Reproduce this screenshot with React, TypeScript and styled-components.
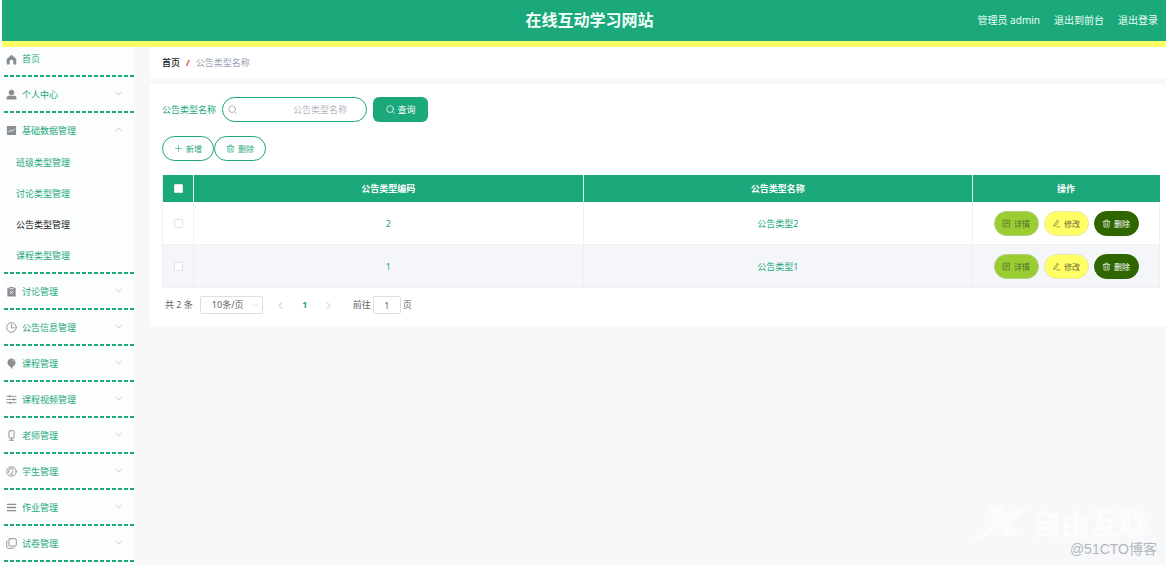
import React from "react";
import styled, { createGlobalStyle, css } from "styled-components";

const green = "#1ba87a";
const uiFont = `"Noto Sans", "Noto Sans CJK SC", sans-serif`;

const GlobalStyle = createGlobalStyle`
  * { box-sizing: border-box; }
  html { background: #fff; }
  body { margin: 0; font-family: ${uiFont}; font-size: 9px; line-height: 12px; color: ${green}; }
  button, input, select { font: inherit; color: inherit; margin: 0; }
  a { color: inherit; text-decoration: none; }
`;

const Page = styled.div`
  position: relative;
  display: flex;
  flex-direction: column;
  min-height: 100vh;
  padding-left: 2px;
  overflow: hidden;
`;

const Header = styled.header`
  display: grid;
  grid-template-columns: 1fr auto 1fr;
  align-items: center;
  height: 47px;
  padding: 0 8px 0 19px;
  background: ${green};
  border-bottom: 6px solid #ffff66;
  color: #eafff7;
`;

const SiteTitle = styled.h1`
  grid-column: 2;
  margin: 0;
  padding-bottom: 2px;
  font-size: 16px;
  line-height: 24px;
  font-weight: 700;
  color: #f4fffb;
`;

const HeaderLinks = styled.nav`
  display: flex;
  justify-content: flex-end;
  gap: 14px;
  padding-bottom: 2px;
  font-size: 10px;
  line-height: 16px;
`;

const Body = styled.div`
  flex: 1;
  display: flex;
  background: #f6f8fa;
`;

const Aside = styled.aside`
  flex: 0 0 133px;
  background: #fcfdfd;
`;

const MenuList = styled.ul`
  list-style: none;
  margin: 0;
  padding: 0 0 0 2px;
`;

const MenuGroup = styled.li`
  padding-bottom: 2px;
  background: repeating-linear-gradient(90deg, ${green} 0 4px, transparent 4px 6px) bottom left / 100% 2px no-repeat;
`;

const menuEntry = css`
  display: flex;
  align-items: center;
  width: 100%;
  padding: 0 13px 0 2px;
  border: 0;
  background: none;
  text-align: left;
  color: ${green};
`;

const HomeLink = styled.a`
  ${menuEntry}
  height: 28px;
  padding-bottom: 4px;
`;

const MenuButton = styled.button`
  ${menuEntry}
  height: 34px;
  padding-top: 1px;
  cursor: pointer;
`;

const MenuIcon = styled.svg`
  flex: none;
  width: 11px;
  height: 11px;
  margin-right: 5px;
  color: #8a8d92;
`;

const Arrow = styled.svg<{ $up?: boolean }>`
  width: 7px;
  height: 7px;
  margin-left: auto;
  margin-bottom: 3px;
  color: #a3a8ae;
  transform: ${(p) => (p.$up ? "rotate(180deg)" : "none")};
`;

const SubMenu = styled.ul`
  list-style: none;
  margin: 0;
  padding: 0 0 1px;
`;

const SubLink = styled.a<{ $active?: boolean }>`
  display: flex;
  align-items: center;
  height: 31px;
  padding-left: 12px;
  color: ${(p) => (p.$active ? "#222" : green)};
`;

const Main = styled.main`
  flex: 1;
  min-width: 0;
  padding-left: 15px;
`;

const Breadcrumb = styled.nav`
  display: flex;
  align-items: center;
  gap: 6px;
  height: 31px;
  padding-left: 12px;
  margin-bottom: 6px;
  background: #fff;
  color: #999fb8;
`;

const Crumb = styled.a`
  color: #222;
  font-weight: 500;
`;

const Slash = styled.span`
  color: #d9480f;
  font-weight: 700;
`;

const Card = styled.section`
  padding: 13px 6px 12px 12px;
  background: #fff;
`;

const SearchForm = styled.form`
  display: flex;
  align-items: center;
  margin-bottom: 14px;
`;

const SearchBox = styled.div`
  position: relative;
  margin: 0 6px;
  color: #8fa59d;
`;

const SearchInput = styled.input`
  display: block;
  width: 145px;
  height: 25px;
  padding: 0 19px 0 24px;
  border: 1px solid ${green};
  border-radius: 13px;
  background: #fff;
  text-align: right;
  outline: 0;
  &::placeholder { color: #b4b8bf; opacity: 1; }
`;

const InputIcon = styled.svg`
  position: absolute;
  left: 6px;
  top: 8px;
  width: 9px;
  height: 9px;
`;

const SmallIcon = styled.svg`
  flex: none;
  width: 9px;
  height: 9px;
`;

const Button = styled.button`
  display: inline-flex;
  align-items: center;
  justify-content: center;
  gap: 3px;
  height: 25px;
  padding: 0;
  cursor: pointer;
`;

const QueryButton = styled(Button)`
  width: 55px;
  border: 0;
  border-radius: 6px;
  background: ${green};
  color: #fff;
`;

const Toolbar = styled.div`
  display: flex;
  margin-bottom: 14px;
`;

const OutlineButton = styled(Button)`
  width: 52px;
  border: 1px solid ${green};
  border-radius: 13px;
  background: #fff;
  font-size: 8px;
`;

const tones = {
  detail: css`background: #9acd32; border-color: #b0cf7c; color: #4f6a2c;`,
  edit: css`background: #ffff66; border-color: #e8e8a8; color: #6b6b3a;`,
  remove: css`background: #2f6600; border-color: #2f6600; color: #fff;`,
};

const RowButton = styled(Button)<{ $tone: keyof typeof tones }>`
  width: 45px;
  border: 1px solid;
  border-radius: 13px;
  font-size: 8px;
  ${(p) => tones[p.$tone]}
`;

const Actions = styled.div`
  display: flex;
  justify-content: center;
  gap: 5px;
`;

const Table = styled.table`
  width: 100%;
  table-layout: fixed;
  border-collapse: separate;
  border-spacing: 0;
  border-left: 1px solid #eef0f4;
`;

const Col = styled.col<{ $width?: number }>`
  ${(p) => p.$width && `width: ${p.$width}px;`}
`;

const HeadCell = styled.th`
  height: 27px;
  padding: 0;
  background: ${green};
  border-right: 1px solid #e4f4ee;
  color: #fff;
  font-weight: 700;
  &:last-child { border-right-color: ${green}; }
`;

const Cell = styled.td`
  height: 43px;
  padding: 1px 0 0;
  border-right: 1px solid #eef0f4;
  border-bottom: 1px solid #eef0f4;
  text-align: center;
`;

const Row = styled.tr`
  background: #fff;
  &:nth-child(even) { background: #f5f6fa; }
`;

const Check = styled.input`
  appearance: none;
  display: block;
  width: 9px;
  height: 9px;
  margin: 0 auto;
  border: 1px solid #dfe2e8;
  border-radius: 1px;
  background: #fff;
`;

const Pagination = styled.div`
  display: flex;
  align-items: center;
  height: 18px;
  margin-top: 8px;
  padding-left: 3px;
  color: #606266;
`;

const SizeBox = styled.div`
  position: relative;
  margin: 0 14px 0 7px;
`;

const SizeSelect = styled.select`
  appearance: none;
  display: block;
  width: 63px;
  height: 18px;
  padding: 0 11px;
  border: 1px solid #dcdfe6;
  border-radius: 2px;
  background: #fff;
`;

const SelectArrow = styled.svg`
  position: absolute;
  right: 5px;
  top: 6px;
  width: 6px;
  height: 6px;
  color: #b4b8bf;
  pointer-events: none;
`;

const PageButton = styled.button<{ $current?: boolean }>`
  display: flex;
  align-items: center;
  justify-content: center;
  width: 8px;
  height: 18px;
  padding: 0;
  margin-right: 16px;
  border: 0;
  background: none;
  font-weight: 700;
  color: ${(p) => (p.$current ? green : "#a8abb2")};
`;

const Jumper = styled.label`
  display: flex;
  align-items: center;
  gap: 2px;
  margin-left: 4px;
`;

const PageInput = styled.input`
  width: 28px;
  height: 18px;
  padding: 0;
  border: 1px solid #dcdfe6;
  border-radius: 2px;
  text-align: center;
`;

const Brand = styled.div`
  position: absolute;
  right: 18px;
  bottom: 20px;
  display: flex;
  align-items: center;
  gap: 2px;
  color: #fbfcfd;
  font-size: 29px;
  line-height: 29px;
  font-weight: 900;
  pointer-events: none;
`;

const BrandMark = styled.svg`
  width: 62px;
  height: 44px;
`;

const Credit = styled.div`
  position: absolute;
  right: 9px;
  bottom: 8px;
  font-family: "Liberation Sans", "Noto Sans CJK SC", sans-serif;
  font-size: 14px;
  line-height: 16px;
  color: #b3b6ba;
  pointer-events: none;
`;

const stroke = { fill: "none", stroke: "currentColor", strokeWidth: 1, strokeLinecap: "round", strokeLinejoin: "round" } as const;

const icons = {
  home: <path fill="currentColor" d="M6 .8 11.200 5.400v6H8V8.300a2 2 0 0 0-4 0v3.100H.8v-6z" />,
  user: (
    <g fill="currentColor">
      <circle cx="6" cy="3.700" r="3" />
      <path d="M.6 11.400V9.600C.6 8 2 7.300 4 7.300h4c2 0 3.400.7 3.400 2.300v1.800z" />
    </g>
  ),
  chart: (
    <g>
      <rect x="1" y="1" width="10" height="10" rx=".6" fill="currentColor" />
      <path d="M2.600 8 5 5.500l1.500 1.400L9.400 4" fill="none" stroke="#fff" strokeWidth=".9" />
    </g>
  ),
  board: (
    <g>
      <path fill="currentColor" d="M1.500 1.800H4V1h4v.8h2.500V11.500h-9z" />
      <path d="M3.800 2.900h4.400M4.300 5.300l3.400 3.400M7.700 5.300 4.300 8.700" stroke="#fff" strokeWidth=".9" fill="none" />
    </g>
  ),
  clock: (
    <g {...stroke}>
      <circle cx="6" cy="6" r="5.200" />
      <path d="M6 2.800V6.400h2.800" />
    </g>
  ),
  balloon: (
    <g>
      <path fill="currentColor" d="M6 .6c2.600 0 4.400 1.900 4.400 4.300C10.400 7.600 8 9.200 6.700 10v1.500H5.300V10C4 9.200 1.600 7.600 1.600 4.900 1.600 2.500 3.400.6 6 .6z" />
      <path d="M6.300 2.200c1.400.1 2.300 1 2.400 2.300" fill="none" stroke="#ddd" strokeWidth=".7" />
    </g>
  ),
  sliders: (
    <g {...stroke}>
      <path d="M1 2.500h10M1 6h10M1 9.500h10" />
      <path strokeWidth="1.600" d="M4 1.900v1.200M8.300 5.400v1.200M4.500 8.900v1.200" />
    </g>
  ),
  mic: (
    <g {...stroke}>
      <rect x="3.200" y=".8" width="5.600" height="8" rx="1" />
      <path d="M6 8.800v2.400M3.600 11.200h4.800" />
    </g>
  ),
  gauge: (
    <g {...stroke}>
      <circle cx="6" cy="6" r="5.200" />
      <path d="M2.800 7A3.300 3.300 0 0 1 8.200 3.600M6 8l1.700-2.600M5.200 9h1.600" />
    </g>
  ),
  lines: <path {...stroke} strokeWidth="1.400" d="M1.500 2.500h9M1.500 6h9M1.500 9.500h9" />,
  copy: (
    <g {...stroke}>
      <rect x="3.200" y=".8" width="8" height="8" rx="1.200" />
      <path d="M1.600 3C.9 3.300.8 3.700.8 4.300v5.200c0 1 .7 1.700 1.700 1.700h5.200c.6 0 1-.1 1.400-.8" />
    </g>
  ),
  search: (
    <g {...stroke}>
      <circle cx="5.500" cy="5.500" r="4.500" />
      <path d="m9 9 2 2" />
    </g>
  ),
  plus: <path {...stroke} strokeWidth=".8" d="M6 2v8M2 6h8" />,
  trash: <path {...stroke} strokeWidth=".9" d="M1.500 3.500h9M4.300 3.300V1.500h3.400v1.800M2.600 3.700v7h6.800v-7M4.900 5.800v2.800M7.100 5.800v2.800" />,
  doc: <path {...stroke} strokeWidth=".9" d="M2 1.500h8v9H2zM4 4h4M4 6h4M4 8.200h2" />,
  pen: <path {...stroke} strokeWidth=".9" d="M3 7.700 7.200 1.600l1.700 1.200-4.200 6.100-2 .7zM6.500 10.500h4" />,
};

type IconName = keyof typeof icons;

const Chevron = () => <path {...stroke} d="M1 3.500 6 8.500l5-5" />;

const Glyph = ({ name }: { name: IconName }) => (
  <SmallIcon viewBox="0 0 12 12" aria-hidden="true">{icons[name]}</SmallIcon>
);

const basics = ["班级类型管理", "讨论类型管理", "公告类型管理", "课程类型管理"];

const menu: { icon: IconName; label: string; children?: string[] }[] = [
  { icon: "user", label: "个人中心" },
  { icon: "chart", label: "基础数据管理", children: basics },
  { icon: "board", label: "讨论管理" },
  { icon: "clock", label: "公告信息管理" },
  { icon: "balloon", label: "课程管理" },
  { icon: "sliders", label: "课程视频管理" },
  { icon: "mic", label: "老师管理" },
  { icon: "gauge", label: "学生管理" },
  { icon: "lines", label: "作业管理" },
  { icon: "copy", label: "试卷管理" },
];

const rows = [
  { code: 2, name: "公告类型2" },
  { code: 1, name: "公告类型1" },
];

export default function App() {
  return (
    <Page>
      <GlobalStyle />
      <Header>
        <SiteTitle>在线互动学习网站</SiteTitle>
        <HeaderLinks>
          <span>管理员 admin</span>
          <a href="#front">退出到前台</a>
          <a href="#logout">退出登录</a>
        </HeaderLinks>
      </Header>
      <Body>
        <Aside>
          <MenuList>
            <MenuGroup>
              <HomeLink href="#home">
                <MenuIcon viewBox="0 0 12 12" aria-hidden="true">{icons.home}</MenuIcon>
                首页
              </HomeLink>
            </MenuGroup>
            {menu.map((m) => (
              <MenuGroup key={m.label}>
                <MenuButton type="button" aria-expanded={!!m.children}>
                  <MenuIcon viewBox="0 0 12 12" aria-hidden="true">{icons[m.icon]}</MenuIcon>
                  {m.label}
                  <Arrow viewBox="0 0 12 12" $up={!!m.children} aria-hidden="true"><Chevron /></Arrow>
                </MenuButton>
                {m.children && (
                  <SubMenu>
                    {m.children.map((c) => (
                      <li key={c}>
                        <SubLink href="#list" $active={c === "公告类型管理"}>{c}</SubLink>
                      </li>
                    ))}
                  </SubMenu>
                )}
              </MenuGroup>
            ))}
          </MenuList>
        </Aside>
        <Main>
          <Breadcrumb aria-label="breadcrumb">
            <Crumb href="#home">首页</Crumb>
            <Slash>/</Slash>
            <span>公告类型名称</span>
          </Breadcrumb>
          <Card>
            <SearchForm onSubmit={(e) => e.preventDefault()}>
              <label htmlFor="type-name">公告类型名称</label>
              <SearchBox>
                <SearchInput id="type-name" placeholder="公告类型名称" />
                <InputIcon viewBox="0 0 12 12" aria-hidden="true">{icons.search}</InputIcon>
              </SearchBox>
              <QueryButton type="submit"><Glyph name="search" />查询</QueryButton>
            </SearchForm>
            <Toolbar>
              <OutlineButton type="button"><Glyph name="plus" />新增</OutlineButton>
              <OutlineButton type="button"><Glyph name="trash" />删除</OutlineButton>
            </Toolbar>
            <Table>
              <colgroup>
                <Col $width={31} />
                <Col />
                <Col />
                <Col $width={187} />
              </colgroup>
              <thead>
                <tr>
                  <HeadCell><Check type="checkbox" aria-label="全选" /></HeadCell>
                  <HeadCell>公告类型编码</HeadCell>
                  <HeadCell>公告类型名称</HeadCell>
                  <HeadCell>操作</HeadCell>
                </tr>
              </thead>
              <tbody>
                {rows.map((r) => (
                  <Row key={r.code}>
                    <Cell><Check type="checkbox" aria-label={r.name} /></Cell>
                    <Cell>{r.code}</Cell>
                    <Cell>{r.name}</Cell>
                    <Cell>
                      <Actions>
                        <RowButton type="button" $tone="detail"><Glyph name="doc" />详情</RowButton>
                        <RowButton type="button" $tone="edit"><Glyph name="pen" />修改</RowButton>
                        <RowButton type="button" $tone="remove"><Glyph name="trash" />删除</RowButton>
                      </Actions>
                    </Cell>
                  </Row>
                ))}
              </tbody>
            </Table>
            <Pagination>
              <span>共 2 条</span>
              <SizeBox>
                <SizeSelect aria-label="每页条数" defaultValue="10">
                  <option value="10">10条/页</option>
                </SizeSelect>
                <SelectArrow viewBox="0 0 12 12" aria-hidden="true"><Chevron /></SelectArrow>
              </SizeBox>
              <PageButton type="button" aria-label="上一页">
                <SmallIcon viewBox="0 0 12 12"><path {...stroke} d="M8 2 4 6l4 4" /></SmallIcon>
              </PageButton>
              <PageButton type="button" $current>1</PageButton>
              <PageButton type="button" aria-label="下一页">
                <SmallIcon viewBox="0 0 12 12"><path {...stroke} d="m4 2 4 4-4 4" /></SmallIcon>
              </PageButton>
              <Jumper>
                前往
                <PageInput defaultValue="1" />
                页
              </Jumper>
            </Pagination>
          </Card>
        </Main>
      </Body>
      <Brand aria-hidden="true">
        <BrandMark viewBox="0 0 62 44">
          <path fill="currentColor" d="M17 5h16l6 9 9-7h14L43 20l7 15H36l-5-9C21 33 11 38 0 43c9-6 18-13 26-23z" />
        </BrandMark>
        自由互联
      </Brand>
      <Credit>@51CTO博客</Credit>
    </Page>
  );
}
